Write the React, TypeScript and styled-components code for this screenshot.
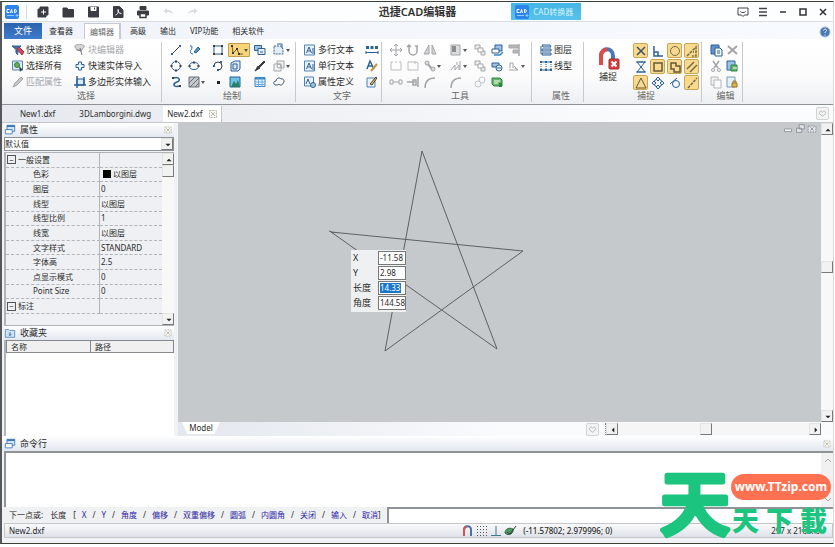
import React from "react";
import styled, { createGlobalStyle, css } from "styled-components";

const GlobalStyle = createGlobalStyle`
  * { box-sizing: border-box; }
  body {
    margin: 0;
    padding: 1px 1px 3px 0;
    background: #fff;
    color: #2b2b2b;
    font: 8px/12px "Noto Sans", "Noto Sans CJK SC", sans-serif;
  }
  button, input, select { font: inherit; color: inherit; padding: 0; margin: 0; }
  button { border: 0; background: none; }
`;

/* ---------- icons ---------- */

const B = "#2c6096";
const L = "#9cc3e6";
const G = "#a3a5a8";
const D = "#3a3d44";
const node = (x: number, y: number, c = B) => <rect x={x - 1} y={y - 1} width="2" height="2" fill={c} stroke="none" />;

const icons: Record<string, React.ReactNode> = {
  add: <><path d="M4 2h8v8h-2v2H2V4h2z" fill={D} stroke={D} /><path d="M5 7h5M7.500 4.500v5" stroke="#fff" /></>,
  folder: <path d="M2 3h4l1 1.500h5.500V12H2z" fill={D} stroke={D} />,
  save: <><path d="M2.500 2h10v10h-10z" fill={D} stroke={D} /><path d="M5 2v3.500h5V2" fill="#fff" stroke="#fff" /><path d="M8.500 2.500v2" stroke={D} /></>,
  pdf: <><path d="M2.500 1.500h6l3.500 3.500v7.500H2.500z" fill={D} stroke={D} /><path d="M4.500 10c3-1 3-4 2.500-5.500C7 7 8 8.500 10.500 8.500" stroke="#fff" /></>,
  print: <><path d="M4 1.500h6v3H4z" fill={D} stroke={D} /><path d="M1.500 6h11v4h-11z" fill={D} stroke={D} /><path d="M4 8.500h6v4H4z" fill="#fff" stroke={D} strokeWidth="1.500" /></>,
  undo: <path d="M6 3 2.500 6 6 9V7c3 0 4.500.5 6 2.500C11.500 6 9 5 6 5z" fill="#dadcdf" stroke="none" />,
  redo: <path d="m8 3 3.500 3L8 9V7C5 7 3.500 7.500 2 9.500 2.500 6 5 5 8 5z" fill="#dadcdf" stroke="none" />,
  chat: <><path d="M2 3h10v7H8.500L7 11.500 5.500 10H2z" stroke="#444" /><path d="M4.500 6.500c1.500 1.500 3.500 1.500 5 0" stroke="#444" /></>,
  menu: <path d="M3 3.500h8M3 7h8M3 10.500h8" stroke="#444" strokeWidth="1.500" />,
  min: <path d="M4 7h6" stroke="#333" strokeWidth="1.500" />,
  max: <path d="M4 4h6v6H4z" stroke="#333" strokeWidth="1.500" />,
  close: <path d="m4 4 6 6M10 4l-6 6" stroke="#333" strokeWidth="1.500" />,
  help: <><circle cx="7" cy="7" r="5" fill="#4778b4" stroke="#a9bfdb" /><path d="M5.500 5.500c.5-2 3-1.500 3 0C8.500 6.500 7 6.500 7 8M7 9.500v1" stroke="#fff" /></>,
  quick: <><path d="M1 3h9L7 6.500V12L5 10V6.500z" fill="#3f74ae" stroke={B} /><path d="m6 6 2-2 5 5-2 3z" fill="#d2455a" stroke="#a93546" /><path d="m7 10 2 3" stroke="#fff" /></>,
  all: <><path d="M1.500 2h10v9h-10z" fill="#d8eaf5" stroke="#5589a9" /><circle cx="6" cy="6" r="2.500" fill="#6bae59" stroke="#397e45" /><path d="M8 7l4 4-2 .5-1 1.500z" fill={D} stroke="none" /></>,
  match: <path d="m2 12 2-4 6-6 2 2-6 6z" fill="#c4c5c8" stroke={G} />,
  blockEdit: <><path d="M1.500 3c2-2 8-2 10 0L9 7H4z" fill="#d6d6d8" stroke={G} /><path d="m7 5 2 7M4 7l5 1" stroke="#77797d" /></>,
  plus: <path d="M5.500 3h3v2.500H11v3H8.500V11h-3V8.500H3v-3h2.500z" fill="#eaf3fb" stroke={B} />,
  polyIn: <><path d="M4 4h7v6H4z" fill="#d9e9f7" stroke={B} /><path d="M4 1v12M1 10h12M11 2v8" stroke={B} strokeWidth="1.500" /></>,
  line: <><path d="M3 11 11 3" stroke={D} />{node(3, 11)}{node(11, 3)}</>,
  pen: <><path d="M3 3c3-1 2 3 1 4s-1 4 2 4" stroke={B} /><path d="m7 9 4-5 2 2-4 4z" fill="#5c92ca" stroke={B} /></>,
  rect: <><path d="M3 3h8v8H3z" stroke={B} />{[3, 11].map(x => [3, 11].map(y => <g key={`${x}-${y}`}>{node(x, y, D)}</g>))}</>,
  poly: <><path d="m2 3 1 7 4-4 2 5 4 0" stroke="#7a5d22" />{node(2, 3, D)}{node(3, 10, D)}{node(7, 6, D)}{node(9, 11, D)}</>,
  copyBlue: <><path d="M1.500 2.500h7v5h-7z" fill={L} stroke={B} /><path d="M5 5.500h7v6H5z" fill="#e3effa" stroke={B} /><path d="M7 9h3" stroke={B} /></>,
  region: <><path d="M2 3h7l2 3v5H2z" fill="#e1eefa" stroke={B} strokeDasharray="2 1" /><path d="M5 1h5v4" stroke={B} /></>,
  circle: <><circle cx="7" cy="7" r="4.500" stroke={B} />{node(7, 2.5, D)}{node(7, 11.5, D)}{node(2.5, 7, D)}{node(11.5, 7, D)}</>,
  ellipse: <><ellipse cx="7" cy="7" rx="4.500" ry="3.500" stroke={B} />{node(2.5, 7, D)}{node(11.5, 7, D)}{node(7, 3.5, D)}</>,
  arc: <><path d="M3 7a4 4 0 1 1 4 4" stroke={D} />{node(3, 7)}{node(7, 11)}{node(10, 3)}</>,
  solid: <><path d="M3 4 7 2h5v8l-2 2H3z" fill="#dae8f5" stroke={B} /><path d="M5 5h4v5H5z" stroke={B} /></>,
  brush: <path d="m2 12 3-5 2 2zM6 7l5-5 1 1-5 5z" fill={D} stroke={D} />,
  layersG: <><path d="M5 2h7v7H5z" fill="#eee" stroke={G} /><path d="M2 5h7v7H2z" fill="#f4f4f4" stroke={G} /><circle cx="7" cy="7" r="2" stroke={G} /></>,
  spline: <><path d="M4 3c7-2 8 3 4 4s-5 6 3 4" stroke={B} strokeWidth="1.500" />{node(4, 3, D)}{node(11, 11, D)}</>,
  hatch: <><path d="M2 2h10v10H2z" fill="#c6c9ce" stroke="#686e78" /><path d="m2 8 6-6M3 12 12 3M8 12l4-4" stroke="#686e78" /></>,
  dot: <rect x="6" y="6" width="3" height="3" fill="#222" stroke="none" />,
  image: <><path d="M2 2h10v10H2z" fill="#6cc3e4" stroke={B} /><path d="m3 12 3-6 2 3 2-4 2 7z" fill="#258068" stroke="none" /></>,
  table: <><path d="M2 2.500h10v9H2z" fill="#e9f5fd" stroke="#3c85c4" /><path d="M2 3.500h10" stroke="#3c85c4" strokeWidth="2" /><path d="M2 7h10M2 9.500h10M5.500 3v9M9 3v9" stroke="#70acd9" /></>,
  cloud: <path d="M4 10c-3 0-3-4 0-4 0-3 4-4 5-2 3-1 4 3 2 4 0 2-3 3-4 1-1 1-2 1-3 1z" stroke="#3d536d" />,
  textA: <><path d="M1.500 2h10v10h-10z" fill="#e8f2fb" stroke="#4e83b8" /><path d="m3.500 10 2.500-6 2.500 6M4.500 8H8M10 5v6" stroke={B} /></>,
  textEdit: <><path d="M1.500 2h9v9h-9z" fill="#e8f2fb" stroke="#4e83b8" /><path d="m3 9 2-5 2 5" stroke={B} /><circle cx="10" cy="10" r="2.500" fill={L} stroke={B} /></>,
  dims: <><path d="M1 3h3v3H1zM5.500 3h3v3h-3zM10 3h3v3h-3z" fill={B} stroke="none" /><path d="M1 9.500h12M1 8v3M13 8v3" stroke={B} /></>,
  aBrush: <><path d="m2 10 3-8 4 8M3 7h4" stroke={B} strokeWidth="1.500" /><path d="m6 12 6-7" stroke="#c4923d" strokeWidth="2" /></>,
  note: <><path d="M2 3h8v9H2z" fill="#eaf2fa" stroke="#4e83b8" /><path d="m5 9 6-7 1 1-5 7z" fill="#dfb660" stroke="#534536" /></>,
  move: <path d="M7 1v12M1 7h12M5 3l2-2 2 2M5 11l2 2 2-2M3 5 1 7l2 2M11 5l2 2-2 2" stroke={G} />,
  rotate: <path d="M3 3v5a4 4 0 0 0 8 0V3M1 4l2-2 2 2M9 3h3" stroke={G} strokeWidth="1.500" />,
  mirror: <path d="M6 2v9H1zM9 2v9h4z" fill="#d4d4d6" stroke={G} />,
  array: <><path d="M2 2h9v10H2z" fill="#ddd" stroke={G} /><path d="M3 3h4v6H3z" fill="#8b8d90" stroke="none" /></>,
  dup: <><path d="M2 2h5v4H2zM8 8h4v4H8z" fill="#eee" stroke={G} /><path d="M5 5h5v4H5z" fill="#fff" stroke={G} /></>,
  front: <><path d="M5 2h7v6H5z" fill={L} stroke={B} /><path d="M2 6h7v4H2z" fill="#fff" stroke={B} /><path d="M4 12h6l3-3" stroke="#3c85c4" strokeWidth="1.500" /></>,
  back: <><path d="M2 4h7v4H2z" fill={L} stroke={B} /><circle cx="9" cy="9" r="3" fill="#eef6fd" stroke={B} /><path d="M7 9h4" stroke={B} /></>,
  align: <><path d="M12 1v12" stroke="#77797d" /><path d="M2 2h9v3H2zM6 7h5v3H6z" fill="#b7b8ba" stroke={G} /></>,
  brk: <path d="M4 3H2v8h10V3h-2M6 3h2" stroke="#bcbdc0" />,
  join: <path d="M2 3h8l2 1v7H2zM9 2v3" stroke="#bcbdc0" />,
  linkG: <><path d="m3 3 7 8" stroke={G} strokeWidth="2" /><circle cx="4" cy="4" r="2" fill="#ddd" stroke={G} /><circle cx="10" cy="10" r="2" fill="#ddd" stroke={G} /></>,
  vert: <><path d="m2 11 4-5v5l4-5v5" stroke={G} /><path d="M8 3v3M11 2v9" stroke={G} /></>,
  stack: <path d="M2 11h9M3 9V4h3v5M8 9l3 2M7 7l4 4" stroke={G} />,
  trim: <path d="M1 5h3v4H1zM10 5h3v4h-3zM4 7h6" stroke={G} />,
  extend: <path d="M1 7h8M7 5h3v5H7zM12 2v10" stroke={G} strokeWidth="1.500" />,
  fillet: <path d="M2 13C2 6 6 3 12 3" stroke={G} strokeWidth="1.500" />,
  chain: <><circle cx="5" cy="9" r="3" stroke="#c3c4c6" /><circle cx="9" cy="5" r="3" stroke="#c3c4c6" /></>,
  green: <><path d="M2 3h8l2 2v6H4L2 9z" fill="#67b866" stroke="#2f8246" /><path d="M4 6h6M4 8h4" stroke="#fff" /><path d="M9 8h3v4H9z" fill="#2f8246" stroke="none" /></>,
  layers: <><path d="M3 2h8l1 2H4zM3 6h9v2H3zM3 10h9v2H3z" fill="#d9e9f7" stroke={B} /><path d="M2 3v8" stroke={B} /></>,
  ltype: <><path d="M2 3h10M2 11h10" stroke={B} /><path d="M2 3v8M7 3v8M12 3v8" stroke={B} strokeDasharray="1 1" />{[2, 7, 12].map(x => <g key={x}>{node(x, 3)}{node(x, 11)}</g>)}</>,
  sX: <path d="m3 3 8 8M11 3l-8 8" stroke="#3e4f62" strokeWidth="1.500" />,
  perp: <path d="M3 2v10h9M3 8h4v4" stroke={B} strokeWidth="1.500" />,
  sCircle: <circle cx="7" cy="7" r="4.500" stroke="#776b45" />,
  sAngle: <path d="m2 12 9-9v9H7M8 8h1" stroke="#776b45" strokeWidth="1.500" strokeDasharray="3 1" />,
  hour: <path d="M3 2h8L3 12h8zM2 2h10M2 12h10" stroke={B} />,
  sRect: <path d="M3 3h8v8H3z" stroke="#655a3b" strokeWidth="1.500" />,
  sPoly: <path d="M3 3h5v3h4v6H6V9H3z" stroke="#655a3b" strokeWidth="1.500" />,
  par: <path d="m2 9 7-7M5 12l7-7" stroke="#776b45" strokeWidth="1.500" />,
  tri: <path d="m7 2 5 10H2z" stroke="#655a3b" />,
  quad: <><circle cx="7" cy="7" r="4" stroke={B} /><path d="m7 1 2 2-2 2-2-2zM7 9l2 2-2 2-2-2zM3 5l2 2-2 2-2-2zM11 5l2 2-2 2-2-2z" fill="#dbe9f6" stroke={B} /></>,
  tan: <><circle cx="8" cy="8" r="3.500" stroke={B} /><path d="M2 8 9 2" stroke={B} /></>,
  ext: <path d="m3 12 9-10" stroke="#776b45" strokeWidth="1.500" strokeDasharray="3 1" />,
  paste: <><path d="M2 2h8v9H2z" fill="#5f92c7" stroke={B} /><path d="M6 5h5l2 2v6H6z" fill="#f2f8fd" stroke={B} /><path d="M8 8h3M8 10h3" stroke={B} /></>,
  del: <path d="m3 3 9 8M12 3l-9 8" stroke={G} strokeWidth="2" />,
  cut: <><path d="m4 2 5 7M10 2 5 9" stroke={G} strokeWidth="1.500" /><circle cx="4" cy="11" r="1.500" stroke={G} /><circle cx="10" cy="11" r="1.500" stroke={G} /></>,
  pasteG: <><path d="M2 2h8v9H2z" fill="#9cc3e6" stroke={B} /><path d="M6 6h6v6H6z" fill="#62b76a" stroke="#2f8246" /><path d="M8 9h4" stroke="#fff" /></>,
  copyG: <><path d="M2 2h7v8H2z" fill="#f3f3f3" stroke="#b4b6b9" /><path d="M5 5h7v8H5z" fill="#fafafa" stroke="#b4b6b9" /></>,
  lock: <><path d="M2 2h8v10H2z" fill="#e6f0f9" stroke="#789bbd" /><path d="M7 8h5v4H7z" fill="#dfb645" stroke="#99772b" /><path d="M8 8V6h3v2" stroke="#99772b" /></>,
  panel: <><path d="M3.500 1.500h9v7h-9z" fill="#cfe3f5" stroke="#3a79b4" /><path d="M3.500 2.500h9" stroke="#3a79b4" strokeWidth="2" /><path d="M1.500 6.500h8v5h-8z" fill="#fff" stroke="#3a79b4" /></>,
  fav: <><path d="M1.500 3h4l1 1h6v8h-11z" fill="#cfe3f5" stroke="#5c8ab5" /><path d="M7 6v4M5.500 8.500 7 10l1.500-1.500" stroke={B} /></>,
  x: <><path d="M3.500 3.500h7v7h-7z" fill="#fcfcf8" stroke="#b5b5a6" strokeDasharray="2 1" /><path d="m5 5 4 4M9 5 5 9" stroke="#b5b5a6" /></>,
  heart: <path d="M7 10.500 3 7c0-4 3-3.500 4-1.500C8 3.500 11 3 11 7z" stroke="#aaa" />,
  wMin: <path d="M3 7h8v3H3z" fill="#fff" stroke="#858a92" />,
  wRest: <path d="M6 2h6v5H6zM3 6h6v5H3z" fill="#e4e7eb" stroke="#858a92" />,
  wClose: <><path d="M2.500 3.500h9v7h-9z" fill="#e4e7eb" stroke="#858a92" strokeDasharray="2 1" /><path d="m5 5 4 4M9 5 5 9" stroke="#858a92" /></>,
  magnetS: <><path d="M3 12V6c0-5 7-5 7 0v6" stroke="#4770ae" strokeWidth="2" /><path d="M3 12V6c0-2 1-3 2.500-3.700" stroke="#d0544f" strokeWidth="2" /></>,
  grid: <>{[2, 5, 8, 11].map(x => [2, 5, 8, 11].map(y => <rect key={`${x}-${y}`} x={x} y={y} width="1" height="1" fill="#555" stroke="none" />))}</>,
  ortho: <path d="M7 2v9M2 11.500h10" stroke="#41798f" />,
  osnap: <><path d="M2 9c0-4 4-6 8-4 1 4-4 8-8 4z" fill="#4d9b62" stroke="#2c6b42" /><path d="m4 8 3 2 6-8" stroke="#333" /></>,
  logo: <><rect width="14" height="14" rx="2" fill="#2e84e8" stroke="none" /><path d="M4.500 4.500H2v3h2.500M5.500 8l1-3.500L7.500 8M9.500 4.500h1l1 1.500-1 1.500h-1z" stroke="#fff" /><path d="M2 10.500h7M12 9v3M10.500 10.500h3" stroke="#91c8ff" /></>,
  up: <path d="m4 8.500 3-3 3 3z" fill="#222" stroke="none" />,
  down: <path d="m4 5.500 3 3 3-3z" fill="#222" stroke="none" />,
  left: <path d="m8.500 4-3 3 3 3z" fill="#222" stroke="none" />,
  right: <path d="m5.500 4 3 3-3 3z" fill="#222" stroke="none" />,
  chevUp: <path d="m4 9 3-3 3 3" stroke="#aaa" />,
  chevDown: <path d="m4 5 3 3 3-3" stroke="#aaa" />,
};

const Svg = styled.svg`
  display: block;
  flex: none;
  width: 14px;
  height: 14px;
  fill: none;
`;
const Icon = ({ n }: { n: string }) => <Svg viewBox="0 0 14 14" aria-hidden="true">{icons[n]}</Svg>;

const CaretMark = styled.i`
  border: 2px solid transparent;
  border-top: 3px solid #555;
  border-bottom: 0;
`;

/* ---------- frame ---------- */

const Window = styled.div`
  display: flex;
  flex-direction: column;
  min-height: calc(100vh - 4px);
  border: 1px solid #3c4238;
  border-left: 2px solid #55575b;
  border-right-color: #d8dade;
  background: #f1f2f5;
`;

const TitleBar = styled.header`
  display: flex;
  align-items: center;
  height: 20px;
  background: #fdfeff;
  border-bottom: 1px solid #d9dde2;
`;
const TitleSide = styled.div`
  display: flex;
  flex: 1;
  align-items: center;
`;
const QuickBar = styled.div`
  display: flex;
  gap: 11px;
  margin-left: 7px;
  padding-left: 9px;
  border-left: 1px solid #d5d8dc;
`;
const AppLogo = styled.div`
  margin-left: 3px;
`;
const Title = styled.h1`
  margin: 0;
  font-size: 11px;
  line-height: 18px;
  font-weight: 600;
  color: #333;
`;
const Converter = styled.button`
  display: flex;
  align-items: center;
  gap: 4px;
  width: 70px;
  height: 17px;
  margin-left: 55px;
  padding: 0 4px;
  background: linear-gradient(#43b5e5, #58c3ec);
  color: #d9f3ff;
  font-size: 8px;
  white-space: nowrap;
`;
const WindowButtons = styled.div`
  display: flex;
  gap: 6px;
  margin-left: auto;
  padding-right: 3px;
`;

const RibbonTabs = styled.nav`
  display: flex;
  align-items: flex-end;
  height: 17px;
  padding-left: 2px;
  background: linear-gradient(90deg, #f0f4fa, #f7fbff);
`;
const RibbonTab = styled.button<{ $kind?: "file" | "active" }>`
  height: 16px;
  padding: 0 7px;
  white-space: nowrap;
  ${p => p.$kind === "file" && css`
    width: 38px;
    background: linear-gradient(#2b62ad, #3f7cca);
    color: #fff;
    font-size: 9px;
  `}
  ${p => p.$kind === "active" && css`
    padding: 0 5px;
    margin: 0 2px 0 4px;
    border: 1px solid #c6cad1;
    border-width: 1px 2px 0 1px;
    background: #fff;
    color: #666;
  `}
`;
const HelpButton = styled.button`
  margin: 0 1px 0 auto;
`;

const Ribbon = styled.section`
  display: flex;
  height: 66px;
  padding: 3px 0 2px 2px;
  background: linear-gradient(#fff, #fbfbfc 60%, #eeeff2);
  border-bottom: 1px solid #8e9196;
`;
const Group = styled.div<{ $w: number }>`
  display: flex;
  flex-direction: column;
  justify-content: space-between;
  flex: none;
  width: ${p => p.$w}px;
  padding-left: 7px;
  border-right: 1px solid #c6c9cf;
`;
const GroupBody = styled.div`
  display: flex;
`;
const GroupLabel = styled.div`
  font-size: 9px;
  line-height: 12px;
  text-align: center;
  color: #666;
`;
const ToolGrid = styled.div<{ $cols: string }>`
  display: grid;
  grid-template-columns: ${p => p.$cols};
  grid-auto-rows: 16px;
  align-items: center;
`;
const Tool = styled.button<{ $on?: boolean }>`
  display: flex;
  align-items: center;
  justify-self: start;
  ${p => p.$on && css`
    width: 22px;
    padding-left: 2px;
    background: #f8d47c;
    outline: 1px solid #c49d4a;
    outline-offset: -1px;
    border-radius: 1px;
  `}
`;
const TextTool = styled.button<{ $off?: boolean }>`
  display: flex;
  align-items: center;
  gap: 1px;
  font-size: 9px;
  line-height: 14px;
  white-space: nowrap;
  color: ${p => (p.$off ? "#a5a7aa" : "#2b2b2b")};
`;
const SnapToggle = styled.button`
  display: grid;
  place-items: center;
  width: 15px;
  height: 15px;
  border: 1px solid transparent;
  border-radius: 2px;
  &[aria-pressed="true"] {
    background: #f9d98d;
    border-color: #c9a654;
  }
`;
const MagnetButton = styled.button`
  display: flex;
  flex-direction: column;
  align-items: center;
  gap: 1px;
  width: 36px;
  margin-right: 8px;
  padding-top: 4px;
  font-size: 9px;
  svg { width: 24px; height: 24px; }
`;

/* ---------- document tabs ---------- */

const DocTabs = styled.nav`
  display: flex;
  align-items: flex-end;
  height: 18px;
  padding: 0 4px 0 6px;
  background: linear-gradient(90deg, #e5e8ee, #fbfcfd 80%);
  border-bottom: 1px solid #c3c6cb;
`;
const DocTab = styled.button<{ $active?: boolean }>`
  display: flex;
  align-items: center;
  justify-content: space-between;
  height: 16px;
  padding: 0 12px;
  ${p => p.$active && css`
    width: 59px;
    padding: 0 1px 0 4px;
    background: #fff;
    border-right: 1px solid #c3c6cb;
  `}
`;
const HeartButton = styled.button`
  align-self: center;
  margin-left: auto;
  border: 1px solid #d2d3d5;
  border-radius: 2px;
  background: #f4f4f4;
  svg { width: 11px; height: 11px; }
`;

/* ---------- side panels ---------- */

const Main = styled.main`
  display: flex;
  flex: 1;
`;
const Side = styled.aside`
  display: flex;
  flex-direction: column;
  flex: none;
  width: 176px;
  padding: 0 4px 0 2px;
`;
const PanelHead = styled.div`
  display: flex;
  align-items: center;
  gap: 4px;
  flex: none;
  height: 14px;
  font-size: 9px;
  background: linear-gradient(#fff, #e3e7f0);
  button { margin-left: auto; }
  svg { width: 12px; height: 12px; }
`;
const CommandHead = styled(PanelHead)`
  height: 15px;
  padding-left: 2px;
`;
const SelectBox = styled.div`
  display: flex;
  height: 14px;
  background: #fff;
  border: 1px solid #8d9094;
  select {
    flex: 1;
    appearance: none;
    border: 0;
    background: none;
  }
`;
const Key = styled.button`
  display: grid;
  place-items: center;
  flex: none;
  width: 12px;
  height: 12px;
  background: #f2f2f2;
  border: 1px solid #e4e4e4;
  border-right-color: #77797c;
  border-bottom-color: #77797c;
  svg { width: 12px; height: 12px; }
`;
const PropBox = styled.div`
  display: flex;
  height: 174px;
  margin-top: 1px;
  border: 1px solid #b0b3b8;
  border-left-width: 2px;
  border-right: 0;
  background: #eff0f3;
`;
const PropTable = styled.table`
  flex: 1;
  height: 161px;
  border-spacing: 0;
  table-layout: fixed;
  th, td {
    padding: 0;
    border-bottom: 1px dashed #b2b4b8;
    font-weight: 400;
    text-align: left;
    white-space: nowrap;
  }
  th { width: 94px; padding-left: 27px; border-right: 1px solid #b2b4b8; }
  td { padding-left: 1px; }
`;
const SectionCell = styled.div`
  display: flex;
  align-items: center;
  gap: 2px;
  margin-left: -26px;
`;
const Fold = styled.button`
  width: 9px;
  height: 9px;
  border: 1px solid #555;
  line-height: 6px;
`;
const Swatch = styled.span`
  display: inline-block;
  width: 8px;
  height: 8px;
  margin: 0 2px;
  background: #000;
  vertical-align: -1px;
`;
const ScrollColumn = styled.div`
  display: flex;
  flex-direction: column;
  flex: none;
  width: 12px;
  background: #f8f8f8;
`;
const Spacer = styled.div<{ $grow?: number }>`
  flex: ${p => p.$grow ?? 100};
`;
const FavBox = styled.div`
  flex: 1;
  background: #fff;
  border-left: 2px solid #b0b3b8;
`;
const FavTable = styled.table`
  width: 100%;
  border-spacing: 0;
  border: 1px solid #85888c;
  th {
    width: 50%;
    height: 11px;
    padding: 0 4px;
    background: #f0f0f0;
    font-weight: 400;
    line-height: 10px;
    text-align: left;
  }
  th + th { border-left: 1px solid #85888c; }
`;

/* ---------- drawing area ---------- */

const Work = styled.section`
  display: flex;
  flex-direction: column;
  flex: 1;
  min-width: 0;
`;
const WorkRow = styled.div`
  display: flex;
  flex: 1;
`;
const Canvas = styled.div`
  position: relative;
  flex: 1;
  min-height: 299px;
  background: #c5c9cc;
`;
const Drawing = styled.svg`
  position: absolute;
  left: 0;
  top: 0;
  width: 400px;
  height: 280px;
  fill: none;
  stroke: #5d6064;
`;
const DocButtons = styled.div`
  position: absolute;
  right: 3px;
  top: 0;
  display: flex;
  svg { width: 12px; height: 12px; }
`;
const Entry = styled.form`
  position: absolute;
  left: 173px;
  top: 127px;
  width: 55px;
  padding: 0 0 2px 2px;
  background: #eef0f1;
`;
const EntryRow = styled.label`
  display: flex;
  align-items: center;
  justify-content: space-between;
  height: 15px;
  font-size: 9px;
  white-space: nowrap;
`;
const EntryField = styled.span`
  width: 28px;
  height: 14px;
  padding: 1px 0 0 1px;
  border: 1px solid #777;
  background: #fff;
  font-size: 8px;
  line-height: 10px;
  input {
    display: block;
    width: 100%;
    height: 10px;
    border: 0;
    outline: 0;
    background: none;
  }
`;
const SelectedField = styled(EntryField)`
  input { width: 21px; background: #1976c8; color: #fff; }
`;
const ModelBar = styled.div`
  display: flex;
  align-items: center;
  height: 14px;
  background: linear-gradient(90deg, #e3e7ee, #fafbfd 50%);
`;
const ModelTab = styled.button`
  align-self: flex-start;
  width: 38px;
  height: 12px;
  margin-left: 4px;
  background: #fff;
  clip-path: polygon(0 0, 100% 0, 86% 100%, 14% 100%);
`;
const ScrollRow = styled.div`
  display: flex;
  align-items: center;
  width: 216px;
  margin: 0 12px 0 6px;
  border-left: 1px dotted #888;
  background: #f6f6f6;
`;

/* ---------- command area ---------- */

const Log = styled.div`
  display: flex;
  justify-content: flex-end;
  height: 56px;
  margin-left: 2px;
  background: #fff;
  border: 1px solid #8f9296;
  border-width: 2px 0 0 2px;
`;
const LogScroll = styled(ScrollColumn)`
  justify-content: space-between;
  background: #f1f1f1;
`;
const CommandRow = styled.form`
  display: flex;
  align-items: center;
  height: 16px;
  padding-left: 7px;
  background: #f0f1f2;
  white-space: pre;
  input {
    flex: 1;
    align-self: stretch;
    margin-left: 6px;
    border: 2px solid #8f9296;
    border-width: 2px 0 0 2px;
    background: #fff;
  }
`;
const Prompt = styled.span`
  display: flex;
  gap: 7px;
  padding-right: 6px;
`;
const CommandOption = styled.button`
  color: #2c22a8;
`;
const Divider = styled.span`
  padding: 0 6px;
`;
const StatusBar = styled.footer`
  display: flex;
  align-items: center;
  height: 15px;
  margin: 0 0 5px 2px;
  padding: 0 12px 0 4px;
  border: 1px solid #c4c6ca;
  background: linear-gradient(#fafafb, #dfe2ea);
`;
const StatusSide = styled.div`
  flex: 1;
`;
const Coordinates = styled.div`
  display: flex;
  align-items: center;
  flex: none;
  width: 310px;
  font-weight: 500;
  span { margin-left: 6px; }
`;

/* ---------- watermark ---------- */

const Watermark = styled.div`
  position: absolute;
  right: 3px;
  bottom: 4px;
  display: flex;
  align-items: flex-end;
  color: #1bc57f;
  font-family: "Noto Sans CJK SC", sans-serif;
  font-weight: 900;
`;
const BigMark = styled.svg`
  width: 71px;
  height: 74px;
  overflow: visible;
  fill: #1bc57f;
  stroke: #1bc57f;
  stroke-width: 5px;
  stroke-linejoin: round;
  font-size: 70px;
  font-weight: 500;
`;
const MarkSide = styled.div`
  display: flex;
  flex-direction: column;
  width: 100px;
`;
const Pill = styled.a`
  height: 26px;
  border-radius: 13px;
  background: #ff7150;
  color: #fff;
  font: 700 12px/26px "Noto Sans", sans-serif;
  text-align: center;
  text-decoration: none;
`;
const SmallMark = styled.span`
  display: flex;
  justify-content: space-between;
  padding: 0 4px 0 1px;
  font-size: 27px;
  line-height: 40px;
`;
const Page = styled.div`
  position: relative;
`;

/* ---------- data ---------- */

const drawTools = [
  "line", "pen", "rect", "poly*^", "copyBlue", "region^",
  "circle", "ellipse", "arc", "solid", "brush", "layersG^",
  "spline", "hatch^", "dot", "image", "table", "cloud",
];
const editTools = [
  "move", "rotate", "mirror", "array^", "dup", "front", "align",
  "brk", "join", "linkG^", "vert^", "dup", "back", "stack^",
  "trim", "extend", "fillet", "fillet", "chain", "green",
];
const snaps: [string, boolean][] = [
  ["sX", true], ["perp", false], ["sCircle", true], ["sAngle", true],
  ["hour", false], ["sRect", true], ["sPoly", true], ["par", true],
  ["tri", true], ["quad", false], ["tan", false], ["ext", true],
];
const properties: [string, string][] = [
  ["图层", "0"], ["线型", "以图层"], ["线型比例", "1"], ["线宽", "以图层"],
  ["文字样式", "STANDARD"], ["字体高", "2.5"], ["点显示模式", "0"], ["Point Size", "0"],
];
const options = ["X", "Y", "角度", "偏移", "双重偏移", "圆弧", "内圆角", "关闭", "输入", "取消"];

const tools = (list: string[]) => list.map((t, i) => {
  const n = t.replace(/[*^]/g, "");
  return (
    <Tool key={i} $on={t.includes("*")} aria-label={n}>
      <Icon n={n} />
      {t.includes("^") && <CaretMark />}
    </Tool>
  );
});

const KeyButton = ({ n }: { n: string }) => <Key type="button" aria-label={n}><Icon n={n} /></Key>;
const Thumb = () => <Key as="div" />;

export default function App() {
  return (
    <Page>
      <GlobalStyle />
      <Window>
        <TitleBar>
          <TitleSide>
            <AppLogo><Icon n="logo" /></AppLogo>
            <QuickBar>
              {["add", "folder", "save", "pdf", "print", "undo", "redo"].map(n => (
                <button key={n} aria-label={n}><Icon n={n} /></button>
              ))}
            </QuickBar>
          </TitleSide>
          <Title>迅捷CAD编辑器</Title>
          <TitleSide>
            <Converter><Icon n="logo" />CAD转换器</Converter>
            <WindowButtons>
              {["chat", "menu", "min", "max", "close"].map(n => (
                <button key={n} aria-label={n}><Icon n={n} /></button>
              ))}
            </WindowButtons>
          </TitleSide>
        </TitleBar>

        <RibbonTabs>
          <RibbonTab $kind="file">文件</RibbonTab>
          <RibbonTab>查看器</RibbonTab>
          <RibbonTab $kind="active">编辑器</RibbonTab>
          {["高级", "输出", "VIP功能", "相关软件"].map(t => <RibbonTab key={t}>{t}</RibbonTab>)}
          <HelpButton aria-label="help"><Icon n="help" /></HelpButton>
        </RibbonTabs>

        <Ribbon>
          <Group $w={158}>
            <ToolGrid $cols="62px 1fr">
              <TextTool><Icon n="quick" />快速选择</TextTool>
              <TextTool $off><Icon n="blockEdit" />块编辑器</TextTool>
              <TextTool><Icon n="all" />选择所有</TextTool>
              <TextTool><Icon n="plus" />快速实体导入</TextTool>
              <TextTool $off><Icon n="match" />匹配属性</TextTool>
              <TextTool><Icon n="polyIn" />多边形实体输入</TextTool>
            </ToolGrid>
            <GroupLabel>选择</GroupLabel>
          </Group>
          <Group $w={134}>
            <ToolGrid $cols="18px 24px 17px 25px 19px 20px">{tools(drawTools)}</ToolGrid>
            <GroupLabel>绘制</GroupLabel>
          </Group>
          <Group $w={86}>
            <ToolGrid $cols="62px 16px">
              <TextTool><Icon n="textA" />多行文本</TextTool>
              <Tool aria-label="dimensions"><Icon n="dims" /></Tool>
              <TextTool><Icon n="textA" />单行文本</TextTool>
              <Tool aria-label="text style"><Icon n="aBrush" /></Tool>
              <TextTool><Icon n="textEdit" />属性定义</TextTool>
              <Tool aria-label="edit text"><Icon n="note" /></Tool>
            </ToolGrid>
            <GroupLabel>文字</GroupLabel>
          </Group>
          <Group $w={150}>
            <ToolGrid $cols="17px 17px 26px 24px 17px 17px 20px">{tools(editTools)}</ToolGrid>
            <GroupLabel>工具</GroupLabel>
          </Group>
          <Group $w={52}>
            <ToolGrid $cols="auto">
              <TextTool><Icon n="layers" />图层</TextTool>
              <TextTool><Icon n="ltype" />线型</TextTool>
            </ToolGrid>
            <GroupLabel>属性</GroupLabel>
          </Group>
          <Group $w={118}>
            <GroupBody>
              <MagnetButton>
                <Svg viewBox="0 0 24 24" aria-hidden="true">
                  <path d="M5 19V10C5 1 17 1 17 10v9" stroke="#4a79b9" strokeWidth="4" />
                  <path d="M5 19V10c0-4 3-6.500 6-6.500" stroke="#d94d46" strokeWidth="4" />
                  <rect x="13" y="13" width="10" height="10" rx="1" fill="#d83b3b" stroke="#a72b2b" />
                  <path d="m15.500 15.500 5 5m0-5-5 5" stroke="#fff" strokeWidth="2" />
                </Svg>
                捕捉
              </MagnetButton>
              <ToolGrid $cols="repeat(4, 17px)">
                {snaps.map(([n, on]) => (
                  <SnapToggle key={n} aria-label={n} aria-pressed={on}><Icon n={n} /></SnapToggle>
                ))}
              </ToolGrid>
            </GroupBody>
            <GroupLabel>捕捉</GroupLabel>
          </Group>
          <Group $w={41}>
            <ToolGrid $cols="16px 16px">{tools(["paste", "del", "cut", "pasteG", "copyG", "lock"])}</ToolGrid>
            <GroupLabel>编辑</GroupLabel>
          </Group>
        </Ribbon>

        <DocTabs>
          <DocTab>New1.dxf</DocTab>
          <DocTab>3DLamborgini.dwg</DocTab>
          <DocTab $active>New2.dxf<Icon n="x" /></DocTab>
          <HeartButton aria-label="favourite"><Icon n="heart" /></HeartButton>
        </DocTabs>

        <Main>
          <Side>
            <PanelHead><Icon n="panel" />属性<button aria-label="close"><Icon n="x" /></button></PanelHead>
            <SelectBox>
              <select aria-label="属性"><option>默认值</option></select>
              <KeyButton n="down" />
            </SelectBox>
            <PropBox>
              <PropTable>
                <tbody>
                  <tr><th><SectionCell><Fold aria-label="fold">−</Fold>一般设置</SectionCell></th><td /></tr>
                  <tr><th>色彩</th><td><Swatch />以图层</td></tr>
                  {properties.map(([k, v]) => <tr key={k}><th>{k}</th><td>{v}</td></tr>)}
                  <tr><th><SectionCell><Fold aria-label="fold">−</Fold>标注</SectionCell></th><td /></tr>
                </tbody>
              </PropTable>
              <ScrollColumn>
                <KeyButton n="up" />
                <Thumb />
                <Spacer />
                <KeyButton n="down" />
              </ScrollColumn>
            </PropBox>
            <PanelHead><Icon n="fav" />收藏夹<button aria-label="close"><Icon n="x" /></button></PanelHead>
            <FavBox>
              <FavTable><thead><tr><th>名称</th><th>路径</th></tr></thead></FavTable>
            </FavBox>
          </Side>

          <Work>
            <WorkRow>
              <Canvas>
                <Drawing viewBox="0 0 400 280">
                  <path d="M207 228 244 28 319 226 153 109 345 128z" />
                  <path d="M151 108l5 2" />
                </Drawing>
                <DocButtons>
                  {["wMin", "wRest", "wClose"].map(n => <button key={n} aria-label={n}><Icon n={n} /></button>)}
                </DocButtons>
                <Entry>
                  <EntryRow>X<EntryField><input defaultValue="-11.58" /></EntryField></EntryRow>
                  <EntryRow>Y<EntryField><input defaultValue="2.98" /></EntryField></EntryRow>
                  <EntryRow>长度<SelectedField><input defaultValue="14.33" /></SelectedField></EntryRow>
                  <EntryRow>角度<EntryField><input defaultValue="144.58" /></EntryField></EntryRow>
                </Entry>
              </Canvas>
              <ScrollColumn>
                <KeyButton n="up" />
                <Spacer $grow={92} />
                <Thumb />
                <Spacer />
                <KeyButton n="down" />
              </ScrollColumn>
            </WorkRow>
            <ModelBar>
              <ModelTab>Model</ModelTab>
              <HeartButton aria-label="favourite"><Icon n="heart" /></HeartButton>
              <ScrollRow>
                <KeyButton n="left" />
                <Spacer $grow={84} />
                <Thumb />
                <Spacer />
                <KeyButton n="right" />
              </ScrollRow>
            </ModelBar>
          </Work>
        </Main>

        <CommandHead><Icon n="panel" />命令行<button aria-label="close"><Icon n="x" /></button></CommandHead>
        <Log>
          <LogScroll><Icon n="chevUp" /><Icon n="chevDown" /></LogScroll>
        </Log>
        <CommandRow>
          <Prompt><span>下一点或:</span><span>长度</span><span>[</span></Prompt>
          {options.map((o, i) => (
            <React.Fragment key={o}>
              {i > 0 && <Divider>/</Divider>}
              <CommandOption type="button">{o}</CommandOption>
            </React.Fragment>
          ))}
          {"  "}]
          <input aria-label="命令行" />
        </CommandRow>
        <StatusBar>
          <StatusSide>New2.dxf</StatusSide>
          <Coordinates>
            <Icon n="magnetS" /><Icon n="grid" /><Icon n="ortho" /><Icon n="osnap" />
            <span>(-11.57802; 2.979996; 0)</span>
          </Coordinates>
          <div>297 x 210 x 0</div>
        </StatusBar>
      </Window>

      <Watermark>
        <BigMark viewBox="0 0 71 74"><text x="0" y="64">天</text></BigMark>
        <MarkSide>
          <Pill href="#">www.TTzip.com</Pill>
          <SmallMark><span>天</span><span>下</span><span>載</span></SmallMark>
        </MarkSide>
      </Watermark>
    </Page>
  );
}
